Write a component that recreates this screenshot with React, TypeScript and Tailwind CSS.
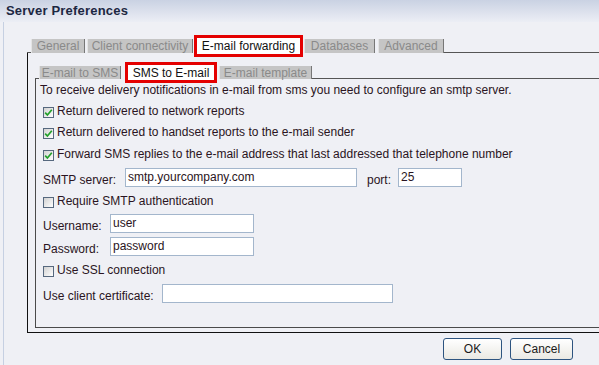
const FONT = "font-['Liberation_Sans',Arial,sans-serif]"
const TEXT = 'text-[#2a1422]'

function Tab({ label, w, h }: { label: string; w: string; h: string }) {
  return (
    <div
      className={`${w} ${h} shrink-0 bg-[#c5c5c5] border-l border-l-[#e4e4e4] border-r border-r-[#777] text-[#8a8a8a] text-[12px] leading-none flex items-center justify-center whitespace-nowrap`}
    >
      {label}
    </div>
  )
}

function ActiveTab({ label, w, h }: { label: string; w: string; h: string }) {
  return (
    <div
      className={`${w} ${h} shrink-0 relative z-10 mb-[-4px] border-[3px] border-[#e40000] bg-white text-[#111] text-[12px] leading-none flex items-center justify-center whitespace-nowrap`}
    >
      {label}
    </div>
  )
}

function Check({ checked, label }: { checked?: boolean; label: string }) {
  return (
    <div className="flex items-center h-[14px]">
      <span className="w-[11px] h-[11px] translate-y-[1px] border border-[#56687e] bg-gradient-to-br from-[#d2d2d2] to-white flex items-center justify-center">
        {checked && (
          <svg width="9" height="9" viewBox="0 0 9 9">
            <path d="M1.2 4.6 L3.4 7 L7.8 1.8" stroke="#22a02a" strokeWidth="1.7" fill="none" />
          </svg>
        )}
      </span>
      <span className={`ml-[3px] text-[12px] leading-[14px] ${TEXT} whitespace-nowrap`}>{label}</span>
    </div>
  )
}

function Field({ value, w }: { value?: string; w: string }) {
  return (
    <div
      className={`${w} h-[19px] shrink-0 border border-[#a3b6cc] bg-white pl-[2px] text-[12px] leading-[17px] ${TEXT} whitespace-nowrap overflow-hidden`}
    >
      {value}
    </div>
  )
}

function Label({ text, w }: { text: string; w: string }) {
  return (
    <span className={`${w} shrink-0 mt-[4px] text-[12px] leading-[14px] ${TEXT} whitespace-nowrap`}>{text}</span>
  )
}

export default function App() {
  return (
    <div className={`w-[599px] h-[365px] overflow-hidden bg-[#eff0f5] flex flex-col ${FONT}`}>
      <div className="h-[22px] shrink-0 bg-gradient-to-b from-[#cad2e3] to-[#eceef5] flex items-center pl-[6px]">
        <span className="text-[13px] font-bold tracking-[0.2px] text-[#1c2742]">Server Preferences</span>
      </div>

      <div className="flex-1 pl-[3px] flex">
        <div className="flex-1 border-l border-[#c6d0e2] pl-[23px] flex flex-col">
          {/* outer tabs */}
          <div className="mt-[13px] h-[18px] flex items-end">
            <div className="w-[4px] self-stretch border-b border-[#555]" />
            <Tab label="General" w="w-[54px]" h="h-[14px]" />
            <div className="w-[2px]" />
            <Tab label="Client connectivity" w="w-[106px]" h="h-[14px]" />
            <div className="w-[1px]" />
            <ActiveTab label="E-mail forwarding" w="w-[109px]" h="h-[22px]" />
            <div className="w-[1px]" />
            <Tab label="Databases" w="w-[71px]" h="h-[14px]" />
            <div className="w-[3px]" />
            <Tab label="Advanced" w="w-[66px]" h="h-[14px]" />
            <div className="flex-1 self-stretch border-b border-[#555]" />
          </div>

          {/* outer panel */}
          <div className="h-[280px] border-l border-b border-[#111] pl-[7px] flex flex-col">
            <div className="mt-[9px] h-[17px] flex items-end">
              <div className="w-[4px] self-stretch border-b border-[#555]" />
              <Tab label="E-mail to SMS" w="w-[82px]" h="h-[13px]" />
              <div className="w-[4px]" />
              <ActiveTab label="SMS to E-mail" w="w-[92px]" h="h-[21px]" />
              <div className="w-[2px]" />
              <Tab label="E-mail template" w="w-[93px]" h="h-[13px]" />
              <div className="flex-1 self-stretch border-b border-[#555]" />
            </div>

            {/* inner panel */}
            <div className="h-[249px] border-l border-b border-[#4a4a4a] pt-[4px] pl-[7px] flex flex-col">
              <p className={`-ml-[3px] h-[14px] text-[12px] leading-[14px] ${TEXT} whitespace-nowrap`}>
                To receive delivery notifications in e-mail from sms you need to configure an smtp server.
              </p>
              <div className="mt-[7px]">
                <Check checked label="Return delivered to network reports" />
              </div>
              <div className="mt-[7px]">
                <Check checked label="Return delivered to handset reports to the e-mail sender" />
              </div>
              <div className="mt-[8px]">
                <Check checked label="Forward SMS replies to the e-mail address that last addressed that telephone number" />
              </div>
              <div className="mt-[7px] flex items-center">
                <Label text="SMTP server:" w="w-[82px]" />
                <Field value="smtp.yourcompany.com" w="w-[232px]" />
                <span className="w-[10px]" />
                <Label text="port:" w="w-[31px]" />
                <Field value="25" w="w-[64px]" />
              </div>
              <div className="mt-[7px]">
                <Check label="Require SMTP authentication" />
              </div>
              <div className="mt-[6px] flex items-center">
                <Label text="Username:" w="w-[67px]" />
                <Field value="user" w="w-[144px]" />
              </div>
              <div className="mt-[4px] flex items-center">
                <Label text="Password:" w="w-[67px]" />
                <Field value="password" w="w-[144px]" />
              </div>
              <div className="mt-[7px]">
                <Check label="Use SSL connection" />
              </div>
              <div className="mt-[7px] flex items-center">
                <Label text="Use client certificate:" w="w-[119px]" />
                <Field w="w-[231px]" />
              </div>
            </div>
          </div>

          {/* buttons */}
          <div className="mt-[5px] flex justify-end gap-[8px] pr-[26px]">
            <button className="w-[59px] h-[22px] rounded-[3px] border border-[#2d5480] bg-gradient-to-b from-white to-[#eae9e3] text-[12px] text-[#1a1a1a]">
              OK
            </button>
            <button className="w-[63px] h-[22px] rounded-[3px] border border-[#2d5480] bg-gradient-to-b from-white to-[#eae9e3] text-[12px] text-[#1a1a1a]">
              Cancel
            </button>
          </div>
        </div>
      </div>
    </div>
  )
}
